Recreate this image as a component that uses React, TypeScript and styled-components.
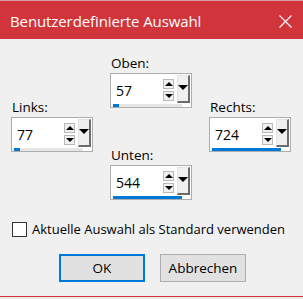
import React from 'react';
import styled, { createGlobalStyle } from 'styled-components';

const GlobalStyle = createGlobalStyle`
  html, body {
    margin: 0;
    padding: 0;
    background: #f0f0f0;
  }
  body {
    font-family: "Open Sans", "Noto Sans", sans-serif;
    color: #000;
  }
`;

const Window = styled.div`
  width: 303px;
  height: 299px;
  display: flex;
  flex-direction: column;
  background: #f0f0f0;
  overflow: hidden;
`;

const TitleBar = styled.div`
  flex-shrink: 0;
  background: #d1343b;
  border-top: 1px solid #d99aa0;
  display: flex;
  align-items: center;
  justify-content: space-between;
  padding: 0 11px 0 10px;
  box-sizing: border-box;
  height: 39px;
`;

const Title = styled.span`
  color: #fff;
  font-size: 15px;
  letter-spacing: -0.1px;
  margin-top: 2px;
`;

const CloseIcon = styled.svg`
  width: 13px;
  height: 13px;
  margin-top: 2px;
`;

const Content = styled.div`
  flex: 1;
  display: flex;
  flex-direction: column;
  padding: 15px 0 0 11px;
`;

const Fields = styled.div`
  display: flex;
  gap: 17px;
`;

const Column = styled.div<{ offset?: number }>`
  display: flex;
  flex-direction: column;
  gap: 38px;
  padding-top: ${p => p.offset ?? 0}px;
`;

const Field = styled.div`
  display: flex;
  flex-direction: column;
`;

const Label = styled.label`
  font-size: 13.5px;
  line-height: 18px;
  height: 18px;
  margin-bottom: 1px;
  padding-left: 1px;
`;

const Box = styled.div`
  width: 82px;
  height: 35px;
  box-sizing: border-box;
  background: #fff;
  border: 1px solid #adadad;
  display: flex;
  flex-direction: column;
  padding: 1px 1px 0 2px;
`;

const Row = styled.div`
  display: flex;
  height: 29px;
`;

const Value = styled.span`
  flex: 1;
  display: flex;
  align-items: center;
  padding-left: 3px;
  padding-top: 3px;
  font-size: 14px;
`;

const SpinStack = styled.div`
  display: flex;
  flex-direction: column;
  justify-content: center;
  gap: 2px;
  margin-right: 3px;
  padding-top: 1px;
`;

const SpinButton = styled.div`
  width: 11px;
  height: 10px;
  box-sizing: border-box;
  background: #f0f0f0;
  border: 1px solid #b9b9b9;
  display: flex;
  align-items: center;
  justify-content: center;
`;

const UpArrow = styled.div`
  width: 0;
  height: 0;
  border-left: 4px solid transparent;
  border-right: 4px solid transparent;
  border-bottom: 4px solid #000;
`;

const DownArrow = styled.div`
  width: 0;
  height: 0;
  border-left: 4px solid transparent;
  border-right: 4px solid transparent;
  border-top: 4px solid #000;
`;

const DropButton = styled.div`
  width: 13px;
  box-sizing: border-box;
  background: #f0f0f0;
  border-top: 1px solid #e3e3e3;
  border-left: 1px solid #e3e3e3;
  border-right: 2px solid #6b6b6b;
  border-bottom: 2px solid #6b6b6b;
  display: flex;
  justify-content: center;
  padding-top: 9px;
`;

const DropArrow = styled.div`
  width: 0;
  height: 0;
  border-left: 5px solid transparent;
  border-right: 5px solid transparent;
  border-top: 5px solid #000;
`;

const Track = styled.div`
  height: 3px;
  margin: 1px 8px 0 0;
  background: #e6e6e6;
`;

const Fill = styled.div`
  height: 100%;
  background: #0078d7;
`;

const CheckRow = styled.label`
  display: flex;
  align-items: center;
  gap: 5px;
  margin-top: 20px;
  padding-left: 1px;
  font-size: 13px;
`;

const CheckBox = styled.span`
  width: 15px;
  height: 15px;
  box-sizing: border-box;
  border: 1px solid #333;
  background: #fff;
`;

const Buttons = styled.div`
  display: flex;
  gap: 15px;
  margin-top: 16px;
  padding-left: 48px;
`;

const Button = styled.button<{ primary?: boolean }>`
  width: 86px;
  height: 28px;
  box-sizing: border-box;
  background: #e1e1e1;
  border: ${p => (p.primary ? '2px solid #0078d7' : '1px solid #adadad')};
  font-family: inherit;
  font-size: 13.5px;
  color: #000;
  padding: 0;
`;

const Spacer = styled.div`
  flex: 1;
`;

const BottomEdge = styled.div`
  height: 2px;
  border-top: 1px solid #d1343b;
  background: #e9e9e9;
  flex-shrink: 0;
`;

const SpinField: React.FC<{ label: string; value: number; fill: number }> = ({ label, value, fill }) => (
  <Field>
    <Label>{label}</Label>
    <Box>
      <Row>
        <Value>{value}</Value>
        <SpinStack>
          <SpinButton><UpArrow /></SpinButton>
          <SpinButton><DownArrow /></SpinButton>
        </SpinStack>
        <DropButton><DropArrow /></DropButton>
      </Row>
      <Track>
        <Fill style={{ width: `${fill}%` }} />
      </Track>
    </Box>
  </Field>
);

export default function App() {
  return (
    <>
      <GlobalStyle />
      <Window>
        <TitleBar>
          <Title>Benutzerdefinierte Auswahl</Title>
          <CloseIcon viewBox="0 0 13 13">
            <path d="M0.5 0.5 L12.5 12.5 M12.5 0.5 L0.5 12.5" stroke="#fff" strokeWidth="1.1" />
          </CloseIcon>
        </TitleBar>
        <Content>
          <Fields>
            <Column offset={44}>
              <SpinField label="Links:" value={77} fill={8} />
            </Column>
            <Column>
              <SpinField label="Oben:" value={57} fill={8} />
              <SpinField label="Unten:" value={544} fill={100} />
            </Column>
            <Column offset={44}>
              <SpinField label="Rechts:" value={724} fill={100} />
            </Column>
          </Fields>
          <CheckRow>
            <CheckBox />
            Aktuelle Auswahl als Standard verwenden
          </CheckRow>
          <Buttons>
            <Button primary>OK</Button>
            <Button>Abbrechen</Button>
          </Buttons>
          <Spacer />
        </Content>
        <BottomEdge />
      </Window>
    </>
  );
}
